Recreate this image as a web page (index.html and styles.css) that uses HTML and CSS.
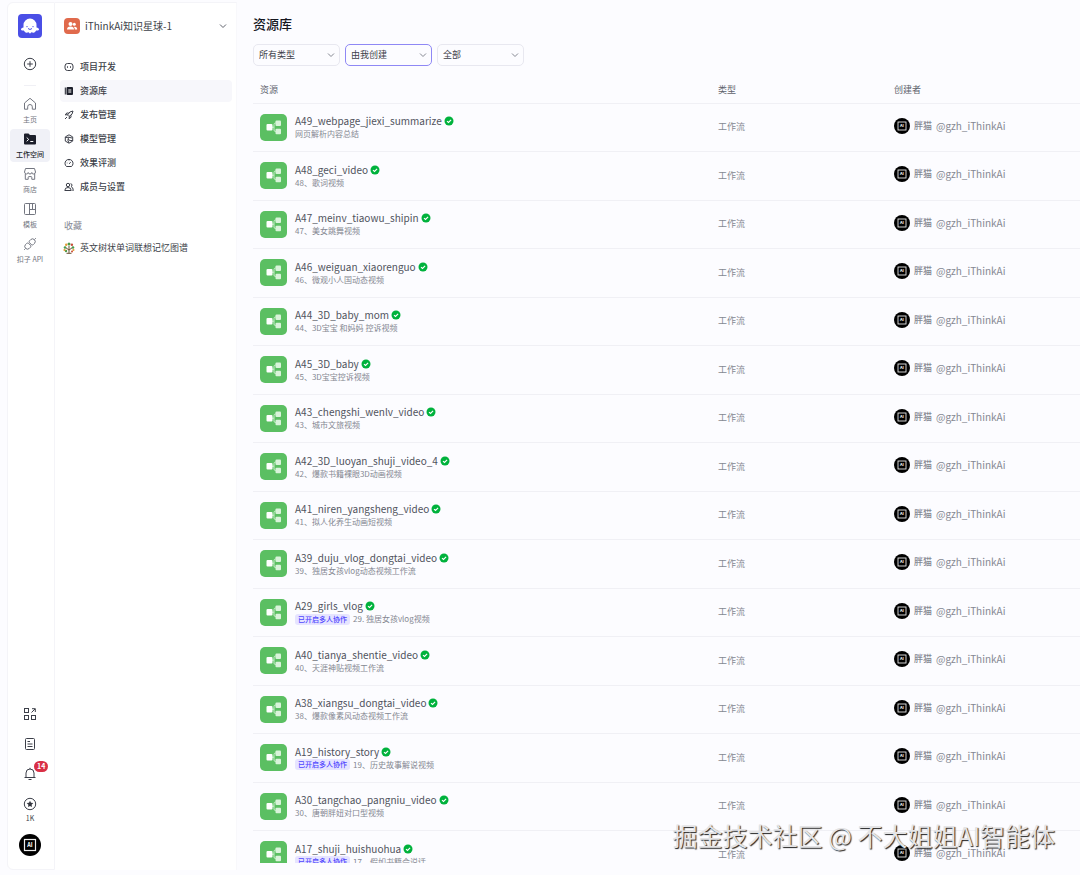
FILE: index.html
```
<!DOCTYPE html>
<html lang="zh-CN">
<head>
    <meta charset="UTF-8">
    <meta name="viewport" content="width=device-width, initial-scale=1.0">
    <title>资源库</title>
    <link rel="stylesheet" href="styles.css">
</head>
<body>
    <!-- Iconos compartidos -->
    <svg class="sprite" aria-hidden="true">
        <symbol id="flow" viewBox="0 0 27 27">
            <rect width="27" height="27" rx="5" fill="#5bbf62"/>
            <path d="M12 13.200h2M17 9h-1.500q-1.500 0-1.500 1.500v5.500q0 1.500 1.500 1.500H17" fill="none" stroke="#c8edca"/>
            <rect x="6.500" y="10" width="6" height="6.500" rx="1" fill="#fff"/>
            <rect x="15.500" y="6.500" width="5.500" height="5.500" rx="1" fill="#d9f3da"/>
            <rect x="15.500" y="14.800" width="5.500" height="5.500" rx="1" fill="#d9f3da"/>
        </symbol>
        <symbol id="ok" viewBox="0 0 10 10">
            <circle cx="5" cy="5" r="4.500" fill="#00b23c"/>
            <path d="M3 5.100l1.500 1.400L7.100 3.800" fill="none" stroke="#fff" stroke-width="1.100"/>
        </symbol>
        <symbol id="avatar" viewBox="0 0 22 22">
            <circle cx="11" cy="11" r="11" fill="#000"/>
            <rect x="5.500" y="5.500" width="11" height="11" fill="none" stroke="#eee" stroke-width="1.200"/>
            <text x="11" y="13" font-size="5.500" font-weight="700" text-anchor="middle" fill="#fff">AI</text>
        </symbol>
        <symbol id="chevron" viewBox="0 0 8 8">
            <path d="M1 2.500l3 3 3-3" fill="none" stroke="currentColor"/>
        </symbol>
    </svg>

    <div class="app">
        <nav class="rail">
            <a href="#" class="logo" aria-label="首页">
                <svg viewBox="0 0 24 24" width="24" height="24">
                    <rect width="24" height="24" rx="4" fill="#4a4fe6"/>
                    <path d="M5.500 11a6.500 6.500 0 0 1 13 0v2.500c1.400.2 2.600 1 2.500 2-.1 1-1.400 1.300-2.800 1-.7 1.200-1.500 2.300-2.700 2.300-1 0-1.300-.5-1.900-.5-.6 0-.8 1.200-1.600 1.200s-1-1.200-1.600-1.200-.9.500-1.900.5c-1.200 0-2-1.100-2.700-2.300-1.400.3-2.700 0-2.800-1-.1-1 1.100-1.800 2.500-2z" fill="#fff"/>
                    <path d="M9 12v1.200M15 12v1.200M10 14.500q2 2 4 0" fill="none" stroke="#4a4fe6"/>
                </svg>
            </a>
            <button class="rail-btn" aria-label="新建">
                <svg viewBox="0 0 14 14" width="14" height="14"><circle cx="7" cy="7" r="5.700"/><path d="M7 4.200v5.600M4.200 7h5.600"/></svg>
            </button>
            <hr class="rail-line">
            <a href="#" class="rail-item">
                <svg viewBox="0 0 14 14" width="14" height="14"><path d="M1.500 6L7 1.300 12.500 6v6.200H9.300V9.800a2.300 2.300 0 0 0-4.600 0v2.400H1.500z"/></svg>
                主页
            </a>
            <a href="#" class="rail-item active">
                <svg viewBox="0 0 14 14" width="14" height="14"><path d="M1 2.500q0-1 1-1h3.500L7 3h5q1 0 1 1v7.500q0 1-1 1H2q-1 0-1-1z" fill="#1c1f2b" stroke="none"/><path d="M3.700 5.500l2 1.900-2 1.900M7.300 9.500h3" stroke="#fff"/></svg>
                工作空间
            </a>
            <a href="#" class="rail-item">
                <svg viewBox="0 0 14 14" width="14" height="14"><path d="M2.500 1.500h9l1 3.500q0 2-1.900 2T8.800 5.500Q8.500 7 7 7T5.200 5.500Q5 7 3.400 7T1.500 5zM2.300 7v5.300h2.900v-2q0-.7.700-.7h2.200q.7 0 .7.700v2h2.900V7"/></svg>
                商店
            </a>
            <a href="#" class="rail-item">
                <svg viewBox="0 0 14 14" width="14" height="14"><rect x="1.500" y="1.500" width="11" height="11" rx="1"/><path d="M6.500 1.500v11M9.500 1.500v5.500M6.500 7.500h6"/></svg>
                模板
            </a>
            <a href="#" class="rail-item">
                <svg viewBox="0 0 14 14" width="14" height="14"><path d="M6.500 3.800l1.300-1.300a2.700 2.700 0 0 1 3.800 3.800L10.300 7.600q-1 .8-1.900 0L6.500 5.700q-.8-1 0-1.900zM7.500 10.200l-1.300 1.300a2.700 2.700 0 0 1-3.800-3.800L3.700 6.400q1-.8 1.900 0l1.900 1.900q.8 1 0 1.900zM11.500 2.500l1.300-1.300M2.500 11.500l-1.300 1.300"/></svg>
                扣子 API
            </a>
            <div class="rail-bottom">
                <button class="rail-btn" aria-label="应用">
                    <svg viewBox="0 0 14 14" width="14" height="14"><rect x="1.500" y="1.500" width="4" height="4"/><rect x="1.500" y="8.500" width="4" height="4"/><rect x="8.500" y="8.500" width="4" height="4"/><path d="M8.500 5.500l3.600-3.600M9 1.700h3.300V5"/></svg>
                </button>
                <button class="rail-btn" aria-label="文档">
                    <svg viewBox="0 0 14 14" width="14" height="14"><rect x="2.500" y="1.500" width="9" height="11" rx="1"/><path d="M4.500 4.500h2.500M4.500 7h5M4.500 9.500h5"/></svg>
                </button>
                <button class="rail-btn" aria-label="通知">
                    <svg viewBox="0 0 14 14" width="14" height="14"><path d="M1.500 10.500h11M3 10.500V6a4 4 0 0 1 8 0v4.500M7 2V.8M5.500 12.500h3"/></svg>
                    <span class="badge">14</span>
                </button>
                <button class="rail-btn points">
                    <svg viewBox="0 0 14 14" width="14" height="14"><circle cx="7" cy="7" r="5.700"/><path d="M7 3.700l1 2.100 2.300.3-1.700 1.600.4 2.300-2-1.100L5 10l.4-2.300-1.700-1.600L6 5.800z" fill="#33363f" stroke="none"/></svg>
                    1K
                </button>
                <a href="#" class="me" aria-label="账号"><svg width="22" height="22"><use href="#avatar"/></svg></a>
            </div>
        </nav>

        <aside class="panel">
            <button class="space">
                <svg viewBox="0 0 16 16" width="16" height="16"><rect width="16" height="16" rx="4" fill="#e06a4c"/><g fill="#fff"><circle cx="6.500" cy="6" r="2"/><path d="M3 11.500q0-3 3.500-3t3.500 3z"/><circle cx="10.300" cy="6.300" r="1.500"/><path d="M10.600 8.700q2.600.1 2.600 2.800h-2.400q.2-1.600-.9-2.600z"/></g></svg>
                <span>iThinkAi知识星球-1</span>
                <svg class="chev" width="8" height="8"><use href="#chevron"/></svg>
            </button>
            <ul class="menu">
                <li><a href="#"><svg viewBox="0 0 10 10" width="10" height="10"><rect x="1" y="1.500" width="8" height="7" rx="2.500"/><path d="M3.500 4.300v1.500M6.500 4.300v1.500"/></svg>项目开发</a></li>
                <li><a href="#" class="active"><svg viewBox="0 0 10 10" width="10" height="10"><path d="M1.300 1.500v7" stroke="#1c1f2b"/><rect x="2.500" y="1" width="6.500" height="8" rx="1" fill="#1c1f2b" stroke="none"/><path d="M4.300 4h3M4.300 6h3" stroke="#fff"/></svg>资源库</a></li>
                <li><a href="#"><svg viewBox="0 0 10 10" width="10" height="10"><path d="M3.500 5Q5.500 1 9 1q0 3.500-4 5.500zM3.500 4.600L1.300 5l1.400-2h2M5.500 6.500L5 8.700l2-1.400v-2M1 9l2-2"/></svg>发布管理</a></li>
                <li><a href="#"><svg viewBox="0 0 10 10" width="10" height="10"><path d="M5 .8l3.700 2.100v4.200L5 9.200 1.300 7.100V2.900zM1.500 3.500q3-.8 6.500.5M5 9Q3 6.500 4.500 3.400M8.500 6.500Q6 7 4 5.500"/></svg>模型管理</a></li>
                <li><a href="#"><svg viewBox="0 0 10 10" width="10" height="10"><path d="M2.500 8.500a4 4 0 1 1 5 0zM5 5.800l1.800-1.600M2.800 5h.6M5 2.500v.6"/></svg>效果评测</a></li>
                <li><a href="#"><svg viewBox="0 0 10 10" width="10" height="10"><circle cx="4" cy="3" r="1.700"/><path d="M.8 8.500q0-3 3.200-3t3.200 3zM6.500 1.700q1.600.1 1.500 1.500-.1 1-1 1.300 2.200.7 2.300 4H8.500"/></svg>成员与设置</a></li>
            </ul>
            <h2>收藏</h2>
            <a href="#" class="fav">
                <svg viewBox="0 0 12 12" width="12" height="12"><path d="M6 11.500V4M6 8L2.500 5.500M6 8l3.500-2.500M3.500 11.300h5" fill="none" stroke="#6b5335"/><g fill="#4c9a4a"><circle cx="6" cy="2" r="1.500"/><circle cx="2" cy="5.500" r="1.300"/><circle cx="10" cy="5.500" r="1.300"/><circle cx="3" cy="9" r="1.200"/></g><g fill="#e59a32"><circle cx="3.200" cy="2.800" r="1.200"/><circle cx="1.500" cy="8" r="1.100"/><circle cx="10.400" cy="8" r="1.100"/></g><g fill="#c84d3a"><circle cx="8.900" cy="2.800" r="1.200"/><circle cx="9" cy="9.500" r="1"/></g></svg>
                英文树状单词联想记忆图谱
            </a>
        </aside>

        <main class="content">
            <h1>资源库</h1>
            <div class="filters">
                <label class="filter">
                    <select aria-label="类型"><option>所有类型</option></select>
                    <svg width="8" height="8"><use href="#chevron"/></svg>
                </label>
                <label class="filter selected">
                    <select aria-label="创建者"><option>由我创建</option></select>
                    <svg width="8" height="8"><use href="#chevron"/></svg>
                </label>
                <label class="filter">
                    <select aria-label="状态"><option>全部</option></select>
                    <svg width="8" height="8"><use href="#chevron"/></svg>
                </label>
            </div>

            <div class="list">
                <table>
                    <thead>
                        <tr><th>资源</th><th class="col-type">类型</th><th class="col-owner">创建者</th></tr>
                    </thead>
                    <tbody>
                        <tr>
                            <td><div class="res"><svg class="flow"><use href="#flow"/></svg><div><div class="name">A49_webpage_jiexi_summarize<svg class="ok"><use href="#ok"/></svg></div><div class="desc">网页解析内容总结</div></div></div></td>
                            <td>工作流</td>
                            <td><div class="owner"><svg><use href="#avatar"/></svg><b>胖猫</b><span>@gzh_iThinkAi</span></div></td>
                        </tr>
                        <tr>
                            <td><div class="res"><svg class="flow"><use href="#flow"/></svg><div><div class="name">A48_geci_video<svg class="ok"><use href="#ok"/></svg></div><div class="desc">48、歌词视频</div></div></div></td>
                            <td>工作流</td>
                            <td><div class="owner"><svg><use href="#avatar"/></svg><b>胖猫</b><span>@gzh_iThinkAi</span></div></td>
                        </tr>
                        <tr>
                            <td><div class="res"><svg class="flow"><use href="#flow"/></svg><div><div class="name">A47_meinv_tiaowu_shipin<svg class="ok"><use href="#ok"/></svg></div><div class="desc">47、美女跳舞视频</div></div></div></td>
                            <td>工作流</td>
                            <td><div class="owner"><svg><use href="#avatar"/></svg><b>胖猫</b><span>@gzh_iThinkAi</span></div></td>
                        </tr>
                        <tr>
                            <td><div class="res"><svg class="flow"><use href="#flow"/></svg><div><div class="name">A46_weiguan_xiaorenguo<svg class="ok"><use href="#ok"/></svg></div><div class="desc">46、微观小人国动态视频</div></div></div></td>
                            <td>工作流</td>
                            <td><div class="owner"><svg><use href="#avatar"/></svg><b>胖猫</b><span>@gzh_iThinkAi</span></div></td>
                        </tr>
                        <tr>
                            <td><div class="res"><svg class="flow"><use href="#flow"/></svg><div><div class="name">A44_3D_baby_mom<svg class="ok"><use href="#ok"/></svg></div><div class="desc">44、3D宝宝 和妈妈 控诉视频</div></div></div></td>
                            <td>工作流</td>
                            <td><div class="owner"><svg><use href="#avatar"/></svg><b>胖猫</b><span>@gzh_iThinkAi</span></div></td>
                        </tr>
                        <tr>
                            <td><div class="res"><svg class="flow"><use href="#flow"/></svg><div><div class="name">A45_3D_baby<svg class="ok"><use href="#ok"/></svg></div><div class="desc">45、3D宝宝控诉视频</div></div></div></td>
                            <td>工作流</td>
                            <td><div class="owner"><svg><use href="#avatar"/></svg><b>胖猫</b><span>@gzh_iThinkAi</span></div></td>
                        </tr>
                        <tr>
                            <td><div class="res"><svg class="flow"><use href="#flow"/></svg><div><div class="name">A43_chengshi_wenlv_video<svg class="ok"><use href="#ok"/></svg></div><div class="desc">43、城市文旅视频</div></div></div></td>
                            <td>工作流</td>
                            <td><div class="owner"><svg><use href="#avatar"/></svg><b>胖猫</b><span>@gzh_iThinkAi</span></div></td>
                        </tr>
                        <tr>
                            <td><div class="res"><svg class="flow"><use href="#flow"/></svg><div><div class="name">A42_3D_luoyan_shuji_video_4<svg class="ok"><use href="#ok"/></svg></div><div class="desc">42、爆款书籍裸眼3D动画视频</div></div></div></td>
                            <td>工作流</td>
                            <td><div class="owner"><svg><use href="#avatar"/></svg><b>胖猫</b><span>@gzh_iThinkAi</span></div></td>
                        </tr>
                        <tr>
                            <td><div class="res"><svg class="flow"><use href="#flow"/></svg><div><div class="name">A41_niren_yangsheng_video<svg class="ok"><use href="#ok"/></svg></div><div class="desc">41、拟人化养生动画短视频</div></div></div></td>
                            <td>工作流</td>
                            <td><div class="owner"><svg><use href="#avatar"/></svg><b>胖猫</b><span>@gzh_iThinkAi</span></div></td>
                        </tr>
                        <tr>
                            <td><div class="res"><svg class="flow"><use href="#flow"/></svg><div><div class="name">A39_duju_vlog_dongtai_video<svg class="ok"><use href="#ok"/></svg></div><div class="desc">39、独居女孩vlog动态视频工作流</div></div></div></td>
                            <td>工作流</td>
                            <td><div class="owner"><svg><use href="#avatar"/></svg><b>胖猫</b><span>@gzh_iThinkAi</span></div></td>
                        </tr>
                        <tr>
                            <td><div class="res"><svg class="flow"><use href="#flow"/></svg><div><div class="name">A29_girls_vlog<svg class="ok"><use href="#ok"/></svg></div><div class="desc"><span class="tag">已开启多人协作</span>29. 独居女孩vlog视频</div></div></div></td>
                            <td>工作流</td>
                            <td><div class="owner"><svg><use href="#avatar"/></svg><b>胖猫</b><span>@gzh_iThinkAi</span></div></td>
                        </tr>
                        <tr>
                            <td><div class="res"><svg class="flow"><use href="#flow"/></svg><div><div class="name">A40_tianya_shentie_video<svg class="ok"><use href="#ok"/></svg></div><div class="desc">40、天涯神贴视频工作流</div></div></div></td>
                            <td>工作流</td>
                            <td><div class="owner"><svg><use href="#avatar"/></svg><b>胖猫</b><span>@gzh_iThinkAi</span></div></td>
                        </tr>
                        <tr>
                            <td><div class="res"><svg class="flow"><use href="#flow"/></svg><div><div class="name">A38_xiangsu_dongtai_video<svg class="ok"><use href="#ok"/></svg></div><div class="desc">38、爆款像素风动态视频工作流</div></div></div></td>
                            <td>工作流</td>
                            <td><div class="owner"><svg><use href="#avatar"/></svg><b>胖猫</b><span>@gzh_iThinkAi</span></div></td>
                        </tr>
                        <tr>
                            <td><div class="res"><svg class="flow"><use href="#flow"/></svg><div><div class="name">A19_history_story<svg class="ok"><use href="#ok"/></svg></div><div class="desc"><span class="tag">已开启多人协作</span>19、历史故事解说视频</div></div></div></td>
                            <td>工作流</td>
                            <td><div class="owner"><svg><use href="#avatar"/></svg><b>胖猫</b><span>@gzh_iThinkAi</span></div></td>
                        </tr>
                        <tr>
                            <td><div class="res"><svg class="flow"><use href="#flow"/></svg><div><div class="name">A30_tangchao_pangniu_video<svg class="ok"><use href="#ok"/></svg></div><div class="desc">30、唐朝胖妞对口型视频</div></div></div></td>
                            <td>工作流</td>
                            <td><div class="owner"><svg><use href="#avatar"/></svg><b>胖猫</b><span>@gzh_iThinkAi</span></div></td>
                        </tr>
                        <tr>
                            <td><div class="res"><svg class="flow"><use href="#flow"/></svg><div><div class="name">A17_shuji_huishuohua<svg class="ok"><use href="#ok"/></svg></div><div class="desc"><span class="tag">已开启多人协作</span>17、假如书籍会说话</div></div></div></td>
                            <td>工作流</td>
                            <td><div class="owner"><svg><use href="#avatar"/></svg><b>胖猫</b><span>@gzh_iThinkAi</span></div></td>
                        </tr>
                    </tbody>
                </table>
            </div>
        </main>
    </div>
    <div class="watermark">掘金技术社区 @ 不大姐姐AI智能体</div>
</body>
</html>
```
FILE: styles.css
```
:root {
    --bg: #fcfcff;
    --line: #f0f0f5;
    --text: #3c3f49;
    --muted: #858892;
    --accent: #5147ff;
}

* {
    margin: 0;
    padding: 0;
    box-sizing: border-box;
}

body {
    height: 100vh;
    overflow: hidden;
    background: var(--bg);
    color: var(--text);
    font-family: "Noto Sans CJK SC", "Noto Sans", sans-serif;
    font-size: 9px;
    line-height: 14px;
}

a {
    color: inherit;
    text-decoration: none;
}

button, select {
    border: none;
    background: none;
    color: inherit;
    font: inherit;
    cursor: pointer;
}

svg {
    display: block;
    flex: none;
}

.sprite {
    position: absolute;
    width: 0;
    height: 0;
}

.app {
    display: flex;
    height: 100vh;
    padding: 2px 0 5px 7px;
}

/* Barra de iconos */
.rail {
    display: flex;
    flex-direction: column;
    align-items: center;
    gap: 2px;
    width: 48px;
    padding: 11px 2px 13px 0;
    background: #fff;
    border: 1px solid #f4f4f8;
    border-radius: 6px 0 0 6px;
}

.rail svg,
.menu svg {
    fill: none;
    stroke: currentColor;
}

.rail .logo svg,
.rail .me svg {
    stroke: none;
}

.rail-btn {
    position: relative;
    display: flex;
    flex-direction: column;
    align-items: center;
    font-size: 7px;
    line-height: 12px;
}

.logo {
    margin-bottom: 17px;
}

.rail-line {
    width: 12px;
    margin: 12px 0 6px;
    border: none;
    border-top: 1px solid var(--line);
}

.rail-item {
    display: flex;
    flex-direction: column;
    align-items: center;
    gap: 2px;
    width: 40px;
    height: 33px;
    padding-top: 3px;
    border-radius: 4px;
    color: #737680;
    font-size: 7px;
    line-height: 12px;
    white-space: nowrap;
}

.rail-item.active {
    background: #f0f1f7;
    color: #1c1f2b;
    font-weight: 500;
}

.rail-bottom {
    display: flex;
    flex-direction: column;
    align-items: center;
    gap: 16px;
    margin-top: auto;
}

.points {
    gap: 1px;
    margin-bottom: -6px;
}

.badge {
    position: absolute;
    top: -6px;
    left: 11px;
    padding: 0 3px;
    border-radius: 6px;
    background: #d92f45;
    color: #fff;
    font-size: 7px;
    font-weight: 700;
    line-height: 11px;
}

/* Panel del espacio */
.panel {
    width: 182px;
    padding: 15px 4px 0 5px;
    background: #fff;
    border-top: 1px solid #f4f4f8;
    border-right: 1px solid #f8f8fb;
}

.space {
    display: flex;
    align-items: center;
    gap: 5px;
    width: 100%;
    margin-bottom: 22px;
    padding: 0 5px 0 4px;
    font-size: 10px;
    line-height: 16px;
}

.space .chev {
    margin-left: auto;
    color: #60636d;
}

.menu {
    display: flex;
    flex-direction: column;
    gap: 2px;
    list-style: none;
}

.menu a {
    display: flex;
    align-items: center;
    gap: 6px;
    height: 22px;
    padding-left: 4px;
    border-radius: 4px;
    font-weight: 500;
}

.menu a.active {
    background: #f7f7fb;
}

.panel h2 {
    margin: 21px 0 8px 4px;
    color: var(--muted);
    font-size: 9px;
    font-weight: 400;
}

.fav {
    display: flex;
    align-items: center;
    gap: 5px;
    padding-left: 3px;
}

/* Contenido */
.content {
    display: flex;
    flex: 1;
    flex-direction: column;
    min-width: 0;
    padding: 11px 0 7px 16px;
}

h1 {
    color: #15171f;
    font-size: 13px;
    font-weight: 500;
    line-height: 22px;
}

.filters {
    display: flex;
    gap: 5px;
    margin: 9px 0 12px;
}

.filter {
    display: grid;
    grid-template-columns: 1fr;
    align-items: center;
    width: 87px;
    color: #858892;
}

.filter select,
.filter svg {
    grid-area: 1 / 1;
}

.filter select {
    width: 100%;
    height: 22px;
    padding: 0 20px 0 5px;
    border: 1px solid #e8e8f0;
    border-radius: 5px;
    color: var(--text);
    appearance: none;
}

.filter svg {
    margin-right: 5px;
    justify-self: end;
    pointer-events: none;
}

.filter.selected select {
    border-color: #8f88f5;
}

.list {
    flex: 1;
    min-height: 0;
    overflow: hidden;
}

table {
    width: 100%;
    border-collapse: collapse;
    table-layout: fixed;
}

th {
    height: 25px;
    padding: 0 7px;
    border-bottom: 1px solid var(--line);
    color: #60636d;
    font-weight: 400;
    text-align: left;
}

.col-type {
    width: 176px;
}

.col-owner {
    width: 193px;
}

td {
    height: 48px;
    padding: 0 7px;
    border-bottom: 1px solid var(--line);
    color: var(--muted);
}

tr:nth-child(even) td {
    height: 49px;
}

.res {
    display: flex;
    align-items: center;
    gap: 8px;
}

.flow {
    width: 27px;
    height: 27px;
}

.name {
    display: flex;
    align-items: center;
    gap: 2px;
    color: #50535d;
    font-size: 10px;
}

.ok {
    width: 10px;
    height: 10px;
}

.desc {
    display: flex;
    align-items: center;
    gap: 3px;
    font-size: 8px;
    line-height: 12px;
}

.tag {
    padding: 0 3px;
    border-radius: 3px;
    background: #e6e4ff;
    color: var(--accent);
    font-size: 7px;
    font-weight: 500;
    line-height: 11px;
}

.owner {
    display: flex;
    align-items: center;
    gap: 4px;
    padding-bottom: 3px;
}

.owner svg {
    width: 16px;
    height: 16px;
}

.owner b {
    font-weight: 500;
}

.owner span {
    font-size: 10px;
}

.watermark {
    position: absolute;
    right: 25px;
    bottom: 22px;
    color: #e4e4e6;
    font-size: 25px;
    line-height: 36px;
    text-shadow: 1px 1px 1px #222;
    pointer-events: none;
}
```
